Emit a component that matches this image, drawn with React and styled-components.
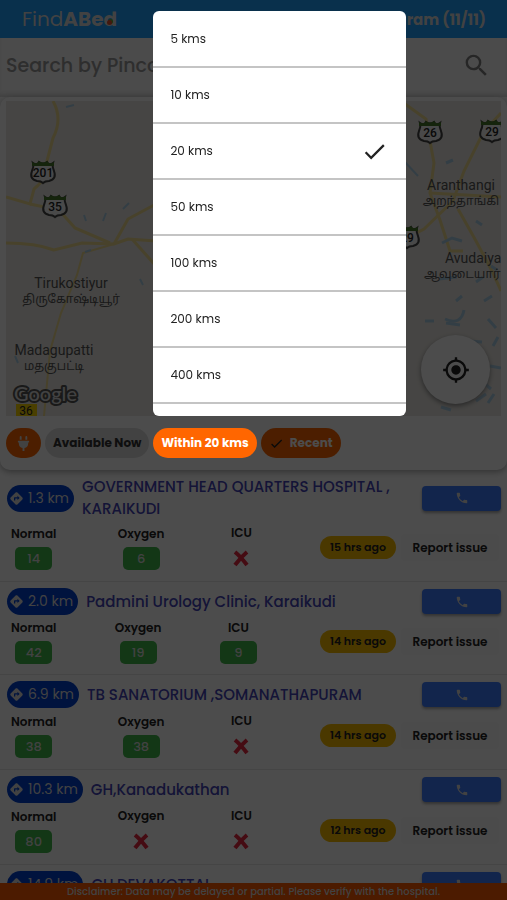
import React, { useState } from 'react'
import styled, { createGlobalStyle } from 'styled-components'
import { FaPlug } from 'react-icons/fa'
import { MdCheck, MdDirections, MdMyLocation, MdPhone, MdSearch } from 'react-icons/md'

const GlobalStyle = createGlobalStyle`
  * { box-sizing: border-box; }
  body {
    margin: 0;
    background: #fff;
    font-family: Poppins, Inter, "Noto Sans", sans-serif;
    color: #222;
  }
  button, input { font-family: inherit; }
`

const Page = styled.div`
  height: 100vh;
  display: flex;
  flex-direction: column;
  overflow: hidden;
  background: #fff;
`

const Header = styled.header`
  flex: none;
  height: 38px;
  padding: 0 21px 0 22px;
  display: flex;
  align-items: center;
  justify-content: space-between;
  background: #1ea0ff;
  color: #ddd;
`

const Logo = styled.h1`
  margin: 0;
  font-size: 20px;
  font-weight: 400;
  b { font-weight: 700; }
`

const LogoEnd = styled.span`
  position: relative;
  &::after {
    content: '';
    position: absolute;
    left: 3px;
    bottom: 8px;
    width: 5px;
    height: 5px;
    border-radius: 50%;
    background: #e05030;
    box-shadow: 1px -1px 0 #60b030;
  }
`

const District = styled.span`
  font-size: 15px;
  font-weight: 700;
`

const SearchBar = styled.form`
  flex: none;
  height: 59px;
  padding: 0 16px 4px 6px;
  display: flex;
  align-items: center;
  background: #fafafa;
  box-shadow: inset 0 -5px 4px -2px #ddd;
`

const SearchInput = styled.input`
  flex: 1;
  min-width: 0;
  border: 0;
  padding: 0;
  background: none;
  font-size: 19px;
  font-weight: 500;
  &::placeholder { color: #999; opacity: 1; }
`

const IconButton = styled.button`
  border: 0;
  padding: 0;
  display: flex;
  background: none;
  color: #808080;
`

const MapCard = styled.section`
  flex: none;
  padding: 4px 6px 12px;
  background: #fff;
  border-radius: 10px;
  box-shadow: 0 2px 6px #aaa;
`

const MapBox = styled.div`
  position: relative;
  height: 315px;
  overflow: hidden;
  background: #ece9e4;
  > svg { display: block; }
`

const Locate = styled.button`
  position: absolute;
  right: 11px;
  bottom: 12px;
  width: 69px;
  height: 69px;
  border: 0;
  border-radius: 50%;
  display: grid;
  place-items: center;
  background: #fff;
  color: #222;
  box-shadow: 0 2px 5px #888;
`

const Chips = styled.div`
  margin-top: 12px;
  display: flex;
  gap: 4px;
`

const Chip = styled.button`
  height: 30px;
  padding: 0 ${(props) => props.$pad || 8}px;
  border: 0;
  border-radius: 15px;
  display: flex;
  align-items: center;
  gap: 6px;
  white-space: nowrap;
  font-size: 12px;
  font-weight: 700;
  background: ${(props) => (props.$active ? '#ff6600' : '#ddd')};
  color: ${(props) => (props.$active ? '#fff' : '#333')};
`

const Picker = styled.div`
  position: relative;
  z-index: 20;
`

const Menu = styled.ul`
  position: absolute;
  left: 0;
  bottom: calc(100% + 12px);
  width: 253px;
  max-height: 405px;
  margin: 0;
  padding: 1px 0 0;
  overflow: hidden;
  list-style: none;
  background: #fff;
  border-radius: 6px;
`

const Option = styled.button`
  width: 100%;
  height: 56px;
  border: 0;
  border-bottom: 2px solid #c4c4c4;
  padding: 0 18px 0 17px;
  display: flex;
  align-items: center;
  justify-content: space-between;
  background: none;
  color: #222;
  font-size: 12px;
`

const Scrim = styled.div`
  position: fixed;
  inset: 0;
  z-index: 10;
  background: rgba(0, 0, 0, 0.7);
`

const List = styled.main`
  flex: 1;
  min-height: 0;
  overflow: hidden;
`

const Item = styled.article`
  padding: 6px 6px 10px 7px;
  border-bottom: 1px solid #e8e8e8;
`

const TitleRow = styled.div`
  display: flex;
  align-items: center;
  gap: 8px;
  margin-bottom: 4px;
`

const Distance = styled.a`
  flex: none;
  height: 27px;
  padding: 0 5px 0 2px;
  border-radius: 14px;
  display: flex;
  align-items: center;
  gap: 4px;
  background: #0040d0;
  color: #ddd;
  font-size: 14px;
  text-decoration: none;
`

const Name = styled.h2`
  flex: 1;
  margin: 0;
  font-size: 15px;
  line-height: 22px;
  font-weight: 500;
  color: #4444b8;
`

const Call = styled.button`
  flex: none;
  width: 79px;
  height: 25px;
  border: 0;
  border-radius: 4px;
  display: grid;
  place-items: center;
  background: #3c7cff;
  color: #ddd;
  box-shadow: 0 2px 3px #aaa;
`

const StatRow = styled.div`
  display: flex;
  align-items: center;
`

const Stats = styled.div`
  width: 51%;
  padding: 0 2px 0 4px;
  display: flex;
  align-items: center;
  justify-content: space-between;
`

const Stat = styled.div`
  display: flex;
  flex-direction: column;
  align-items: center;
  gap: 4px;
`

const StatLabel = styled.span`
  font-size: 12px;
  line-height: 18px;
  font-weight: 600;
`

const Count = styled.span`
  width: 37px;
  height: 23px;
  border-radius: 5px;
  display: grid;
  place-items: center;
  background: #40b84c;
  color: #ddd;
  font-size: 13px;
  font-weight: 500;
`

const NoBeds = styled.span`
  width: 31px;
  height: 25px;
  display: grid;
  place-items: center;
`

const Actions = styled.div`
  flex: 1;
  padding-right: 2px;
  display: flex;
  justify-content: flex-end;
  align-items: center;
  gap: 5px;
`

const Updated = styled.span`
  width: 76px;
  height: 23px;
  border-radius: 12px;
  display: grid;
  place-items: center;
  white-space: nowrap;
  background: #f8bc00;
  font-size: 11px;
  font-weight: 600;
`

const Report = styled.button`
  width: 98px;
  height: 27px;
  border: 0;
  border-radius: 4px;
  padding: 0;
  white-space: nowrap;
  background: #fafafa;
  color: #222;
  font-size: 12px;
  font-weight: 600;
`

const Disclaimer = styled.footer`
  flex: none;
  height: 17px;
  display: grid;
  place-items: center;
  white-space: nowrap;
  background: #ff5a00;
  color: #ddd;
  font-size: 10px;
  font-weight: 500;
`

const distances = [5, 10, 20, 50, 100, 200, 400, 800]

const hospitals = [
  { km: '1.3', name: 'GOVERNMENT HEAD QUARTERS HOSPITAL , KARAIKUDI', beds: [14, 6, 0], updated: '15 hrs ago' },
  { km: '2.0', name: 'Padmini Urology Clinic, Karaikudi', beds: [42, 19, 9], updated: '14 hrs ago' },
  { km: '6.9', name: 'TB SANATORIUM ,SOMANATHAPURAM', beds: [38, 38, 0], updated: '14 hrs ago' },
  { km: '10.3', name: 'GH,Kanadukathan', beds: [80, 0, 0], updated: '12 hrs ago' },
  { km: '14.9', name: 'GH,DEVAKOTTAI', beds: [40, 20, 0], updated: '12 hrs ago' },
]

const Shield = ({ x, y, n }) => (
  <g transform={`translate(${x} ${y})`}>
    <path
      d="M-10-9Q-6-6-4-10Q0-7 4-10Q6-6 10-9Q9-5 11-1Q14 7 6 9Q2 9 0 11Q-2 9-6 9Q-14 7-11-1Q-9-5-10-9Z"
      fill="#f4f4f4"
      stroke="#444"
      strokeWidth="2"
    />
    <path d="M-11-10Q-6-7-4-11Q0-8 4-11Q6-7 11-10V-6H-11Z" fill="#467828" />
    <text y="5" textAnchor="middle" fontSize="12" fontWeight="500" fontFamily="Roboto, sans-serif" fill="#222">{n}</text>
  </g>
)

const Town = ({ x, y, name, local }) => (
  <g textAnchor="middle" fill="#555" fontSize="14" fontFamily='Roboto, "Noto Sans", "Noto Sans Tamil", sans-serif'>
    <text x={x} y={y}>{name}</text>
    <text x={x} y={y + 15} fontSize="12">{local}</text>
  </g>
)

const MapDrawing = () => (
  <svg width="100%" height="315" viewBox="0 0 495 315" preserveAspectRatio="xMidYMid slice" aria-label="Map">
    <rect width="495" height="315" fill="#ebe8e3" />
    <g fill="none" stroke="#f2dc90" strokeWidth="3">
      <path d="M47 0Q57 18 47 37L41 60Q42 77 28 88L24 103L0 96" />
      <path d="M24 103L53 109L69 127L104 142" />
      <path d="M0 142Q30 142 48 149L76 142L108 143L122 138L150 140" />
      <path d="M108 143L77 152L71 174L55 212L44 250L38 315" strokeWidth="2" />
      <path d="M108 143L122 118L150 103M126 138L150 165" />
      <path d="M395 0L420 18L428 62L424 92L434 119L444 150L457 150" />
      <path d="M495 12L478 30L458 70L447 100L418 128L395 140" />
      <path d="M424 92L495 96M452 108L470 140L486 170L495 190" />
    </g>
    <g fill="none" stroke="#acd0e8" strokeWidth="3">
      <path d="M398 60L412 75" strokeWidth="2" />
      <path d="M440 62l7-3M436 142l10-5 10 3M470 120l6 4" />
      <path d="M433 178l18-2M470 181l7-5M485 165l6 4M439 218q16 7 19-9M478 200l8-5" />
      <path d="M419 220l9 0M440 222l14 2M482 218l8 9M484 265l11 2M470 300l10-7M435 306l10 3M460 290l6 5" />
      <path d="M60 6l8-2M78 114l2 6M97 120l3-8M117 108l6-6M79 151l6-2M134 178l3 6M12 262l-3-7" strokeWidth="2" />
      <path d="M392 278l8-5M482 302l6-9M462 240l14 1M448 295l9 6M487 245l5-9M478 282l7 6M450 200l6-5" />
    </g>
    <Shield x={37} y={71} n="201" />
    <Shield x={49} y={105} n="35" />
    <Shield x={424} y={31} n="26" />
    <Shield x={486} y={30} n="29" />
    <Shield x={401} y={136} n="29" />
    <Town x={65} y={187} name="Tirukostiyur" local="திருகோஷ்டியூர்" />
    <Town x={48} y={254} name="Madagupatti" local="மதகுபட்டி" />
    <Town x={455} y={89} name="Aranthangi" local="அறந்தாங்கி" />
    <g fill="#555" fontSize="14" fontFamily='Roboto, "Noto Sans", "Noto Sans Tamil", sans-serif'>
      <text x="439" y="162">Avudaiya</text>
      <text x="418" y="177" fontSize="12">ஆவுடையார்கோ</text>
    </g>
    <rect x="10" y="303" width="21" height="12" fill="#f8d400" />
    <text x="20" y="314" textAnchor="middle" fontSize="12" fontFamily="Roboto, sans-serif" fill="#222">36</text>
    <text
      x="8"
      y="300"
      fontSize="20"
      fontWeight="500"
      fontFamily="Lato, sans-serif"
      fill="#ddd"
      stroke="#555"
      strokeWidth="4"
      strokeLinejoin="round"
      paintOrder="stroke"
    >
      Google
    </text>
  </svg>
)

const Cross = () => (
  <svg width="18" height="18" viewBox="0 0 18 18" aria-label="None">
    <path d="M3 2Q8 6 15 15M15 2Q9 7 3 15" fill="none" stroke="#e82840" strokeWidth="4" />
  </svg>
)

const Bed = ({ label, count }) => (
  <Stat>
    <StatLabel>{label}</StatLabel>
    {count ? <Count>{count}</Count> : <NoBeds><Cross /></NoBeds>}
  </Stat>
)

const Hospital = ({ km, name, beds, updated }) => (
  <Item>
    <TitleRow>
      <Distance href="#directions"><MdDirections size={15} />{km} km</Distance>
      <Name>{name}</Name>
      <Call aria-label={`Call ${name}`}><MdPhone size={14} /></Call>
    </TitleRow>
    <StatRow>
      <Stats>
        <Bed label="Normal" count={beds[0]} />
        <Bed label="Oxygen" count={beds[1]} />
        <Bed label="ICU" count={beds[2]} />
      </Stats>
      <Actions>
        <Updated>{updated}</Updated>
        <Report>Report issue</Report>
      </Actions>
    </StatRow>
  </Item>
)

const App = () => {
  const [range, setRange] = useState(20)
  const [open, setOpen] = useState(true)

  const handleSelect = (value) => {
    setRange(value)
    setOpen(false)
  }

  return (
    <Page>
      <GlobalStyle />
      <Header>
        <Logo>Find<b>ABe<LogoEnd>d</LogoEnd></b></Logo>
        <District>Ramanathapuram (11/11)</District>
      </Header>
      <SearchBar onSubmit={(e) => e.preventDefault()}>
        <SearchInput aria-label="Search by Pincode" placeholder="Search by Pincode" />
        <IconButton aria-label="Search"><MdSearch size={29} /></IconButton>
      </SearchBar>
      <MapCard>
        <MapBox>
          <MapDrawing />
          <Locate aria-label="My location"><MdMyLocation size={28} /></Locate>
        </MapBox>
        <Chips>
          <Chip $active aria-label="Oxygen supply" $pad={10}><FaPlug size={15} color="#ddd" /></Chip>
          <Chip>Available Now</Chip>
          <Picker>
            <Chip $active onClick={() => setOpen(!open)}>Within {range} kms</Chip>
            {open && (
              <Menu>
                {distances.map((value) => (
                  <li key={value}>
                    <Option onClick={() => handleSelect(value)}>
                      {value} kms
                      {value === range && <MdCheck size={27} />}
                    </Option>
                  </li>
                ))}
              </Menu>
            )}
          </Picker>
          <Chip $active><MdCheck size={15} color="#222" />Recent</Chip>
        </Chips>
      </MapCard>
      <List>
        {hospitals.map((h) => <Hospital key={h.name} {...h} />)}
      </List>
      <Disclaimer>Disclaimer: Data may be delayed or partial. Please verify with the hospital.</Disclaimer>
      {open && <Scrim onClick={() => setOpen(false)} />}
    </Page>
  )
}

export default App
